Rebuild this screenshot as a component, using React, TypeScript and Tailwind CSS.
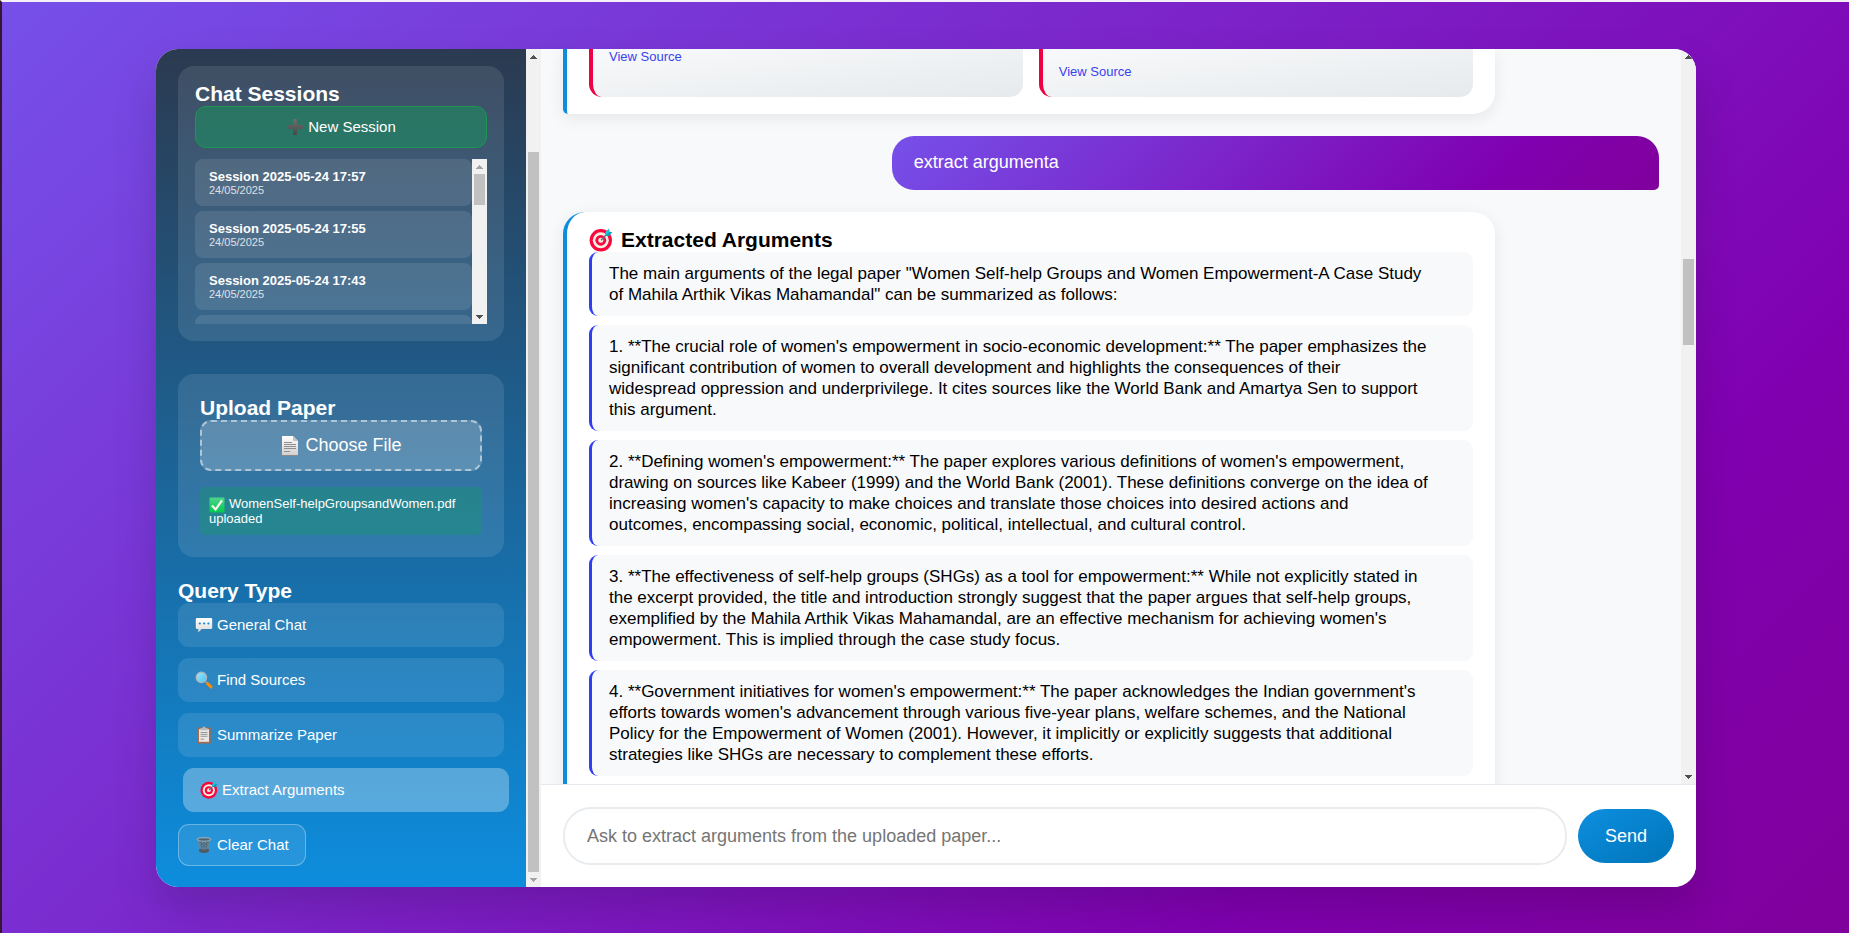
import React from "react";

const sessions = [
  { name: "Session 2025-05-24 17:57", date: "24/05/2025" },
  { name: "Session 2025-05-24 17:55", date: "24/05/2025" },
  { name: "Session 2025-05-24 17:43", date: "24/05/2025" },
];

const argumentsList = [
  `The main arguments of the legal paper "Women Self-help Groups and Women Empowerment-A Case Study
of Mahila Arthik Vikas Mahamandal" can be summarized as follows:`,
  `1. **The crucial role of women's empowerment in socio-economic development:** The paper emphasizes the
significant contribution of women to overall development and highlights the consequences of their
widespread oppression and underprivilege. It cites sources like the World Bank and Amartya Sen to support
this argument.`,
  `2. **Defining women's empowerment:** The paper explores various definitions of women's empowerment,
drawing on sources like Kabeer (1999) and the World Bank (2001). These definitions converge on the idea of
increasing women's capacity to make choices and translate those choices into desired actions and
outcomes, encompassing social, economic, political, intellectual, and cultural control.`,
  `3. **The effectiveness of self-help groups (SHGs) as a tool for empowerment:** While not explicitly stated in
the excerpt provided, the title and introduction strongly suggest that the paper argues that self-help groups,
exemplified by the Mahila Arthik Vikas Mahamandal, are an effective mechanism for achieving women's
empowerment. This is implied through the case study focus.`,
  `4. **Government initiatives for women's empowerment:** The paper acknowledges the Indian government's
efforts towards women's advancement through various five-year plans, welfare schemes, and the National
Policy for the Empowerment of Women (2001). However, it implicitly or explicitly suggests that additional
strategies like SHGs are necessary to complement these efforts.`,
];

type IconProps = { className?: string };

function PlusIcon({ className = "size-[18px]" }: IconProps) {
  return (
    <svg viewBox="0 0 18 18" className={className} aria-hidden="true">
      <defs>
        <linearGradient id="plus-fill" x1="0" y1="0" x2="0" y2="1">
          <stop offset="0" stopColor="#6e6e6e" />
          <stop offset="1" stopColor="#484848" />
        </linearGradient>
      </defs>
      <path
        fill="url(#plus-fill)"
        d="M7.6 1h2.8q.5 0 .5.5v5.6h5.6q.5 0 .5.5v2.8q0 .5-.5.5h-5.6v5.600q0 .5-.5.5H7.600q-.5 0-.5-.5v-5.600H1.500q-.5 0-.5-.5V7.600q0-.5.5-.5h5.600V1.500q0-.5.5-.5z"
      />
    </svg>
  );
}

function PageIcon({ className = "size-5" }: IconProps) {
  return (
    <svg viewBox="0 0 20 20" className={className} aria-hidden="true">
      <defs>
        <linearGradient id="page-fill" x1="0" y1="0" x2="0" y2="1">
          <stop offset="0" stopColor="#ffffff" />
          <stop offset="1" stopColor="#d2d0ce" />
        </linearGradient>
      </defs>
      <path fill="#8d8a88" d="M2 1h11l5 5v14H2z" />
      <path fill="url(#page-fill)" d="M2 0h11l5 5v14H2z" />
      <path fill="#c4c1bf" d="M13 0l5 5h-4q-1 0-1-1z" />
      <path stroke="#8f8f8f" strokeWidth="1" d="M4 6.500h8M4 8.500h12M4 10.500h12M4 12.500h12M4 15.500h6" />
    </svg>
  );
}

function CheckIcon({ className = "size-4" }: IconProps) {
  return (
    <svg viewBox="0 0 16 16" className={className} aria-hidden="true">
      <defs>
        <linearGradient id="check-fill" x1="0" y1="0" x2="0" y2="1">
          <stop offset="0" stopColor="#4fd48a" />
          <stop offset="1" stopColor="#00c853" />
        </linearGradient>
      </defs>
      <rect x=".5" y=".5" width="15" height="15" rx="1" fill="url(#check-fill)" />
      <path d="M3 8.500l3.600 4L13 3.300" fill="none" stroke="#f5f3ea" strokeWidth="2.200" />
    </svg>
  );
}

function BubbleIcon({ className = "size-[18px]" }: IconProps) {
  return (
    <svg viewBox="0 0 18 18" className={className} aria-hidden="true">
      <defs>
        <linearGradient id="bubble-fill" x1="0" y1="0" x2="0" y2="1">
          <stop offset="0" stopColor="#ffffff" />
          <stop offset="1" stopColor="#dcdad8" />
        </linearGradient>
      </defs>
      <path
        fill="url(#bubble-fill)"
        d="M2 2h14q1.200 0 1.200 1.200v8.600q0 1.200-1.200 1.200H6.400Q5 15.800 2.400 16.200q1.200-1.400 1.100-3.200H2q-1.200 0-1.200-1.200V3.200Q.8 2 2 2z"
      />
      <circle cx="4.800" cy="7.500" r="1.100" fill="#1581d8" />
      <circle cx="9.100" cy="7.500" r="1.100" fill="#1581d8" />
      <circle cx="13.400" cy="7.500" r="1.100" fill="#1581d8" />
    </svg>
  );
}

function MagnifierIcon({ className = "size-[18px]" }: IconProps) {
  return (
    <svg viewBox="0 0 18 18" className={className} aria-hidden="true">
      <defs>
        <linearGradient id="lens-fill" x1="0" y1="0" x2="1" y2="1">
          <stop offset="0" stopColor="#a4e6fb" />
          <stop offset="1" stopColor="#45c4f4" />
        </linearGradient>
      </defs>
      <path d="M10 10l3 3" stroke="#9a9a9a" strokeWidth="1.600" />
      <path d="M12.700 12.700l3.200 3.200" stroke="#ff8a00" strokeWidth="3" strokeLinecap="round" />
      <circle cx="6.400" cy="6.400" r="5.200" fill="url(#lens-fill)" stroke="#b3b6b8" strokeWidth="1.200" />
    </svg>
  );
}

function ClipboardIcon({ className = "size-[18px]" }: IconProps) {
  return (
    <svg viewBox="0 0 18 18" className={className} aria-hidden="true">
      <rect x="2.300" y="1.600" width="13.400" height="15.800" rx="1" fill="#a56a4a" />
      <rect x="4" y="3.200" width="10" height="12.600" fill="#e9e7e5" />
      <path fill="#b9b9b9" d="M5.500 2h2q0-1.600 1.500-1.600T10.500 2h2v2.200h-7z" />
      <path stroke="#8f8f8f" strokeWidth=".9" d="M5.500 6.500h7M5.500 8.400h7M5.500 10.300h7M5.500 13.200h3.600" />
    </svg>
  );
}

function TargetIcon({ className = "size-[18px]" }: IconProps) {
  return (
    <svg viewBox="0 0 24 24" className={className} aria-hidden="true">
      <circle cx="11.800" cy="12.300" r="11.200" fill="#f8083c" />
      <circle cx="11.800" cy="12.300" r="8" fill="#f6efe4" />
      <circle cx="11.800" cy="12.300" r="5.400" fill="#f8083c" />
      <circle cx="11.800" cy="12.300" r="2.500" fill="#f6efe4" />
      <path d="M12 12.200L19 5" stroke="#5c7786" strokeWidth="1.500" />
      <path fill="#00a3c4" d="M16.500 4.300L20 .8l.4 3 3 .4-3.600 3.700-3-.3z" />
      <path fill="#26c6da" d="M16.500 4.300L20 .8l.4 3-3.600 3.800z" />
    </svg>
  );
}

function BinIcon({ className = "size-[18px]" }: IconProps) {
  return (
    <svg viewBox="0 0 18 18" className={className} aria-hidden="true">
      <path fill="#6b8ba4" fillOpacity=".75" d="M2.200 3.500h13.600L13.700 16q-4.700 2-9.400 0z" />
      <path
        fill="none"
        stroke="#56666f"
        strokeWidth=".8"
        d="M4 5l8.500 8M7.500 5l6 5.500M11 5l3.500 3.200M14 5l-8.500 8M10.500 5l-6 5.500M7 5L3.500 8.200M6 5.500l.8 7.500M12 5.500l-.8 7.500M9 5.500V13"
      />
      <path fill="#4f5b62" d="M3.900 12.800q5.100 1.400 10.200 0L13.600 16q-4.600 1.900-9.200 0z" />
      <ellipse cx="9" cy="3.300" rx="7" ry="1.900" fill="#7b8d97" stroke="#9fb0b9" strokeWidth=".8" />
      <ellipse cx="9" cy="3.500" rx="5.200" ry=".9" fill="#4b6273" />
    </svg>
  );
}

const queryTypes = [
  { Icon: BubbleIcon, label: "General Chat", active: false },
  { Icon: MagnifierIcon, label: "Find Sources", active: false },
  { Icon: ClipboardIcon, label: "Summarize Paper", active: false },
  { Icon: TargetIcon, label: "Extract Arguments", active: true },
];

function Arrow({ up, dim }: { up?: boolean; dim?: boolean }) {
  return (
    <svg
      width="15"
      height="15"
      viewBox="0 0 15 15"
      shapeRendering="crispEdges"
      className={dim ? "shrink-0 fill-[#a3a3a3]" : "shrink-0 fill-[#505050]"}
      aria-hidden="true"
    >
      <path d={up ? "M7 6h1v1h1v1h1v1h1v1H4V9h1V8h1V7h1z" : "M4 6h7v1h-1v1H9v1H8v1H7V9H6V8H5V7H4z"} />
    </svg>
  );
}

function Scrollbar({
  thumb,
  before,
  upDim,
  downDim,
}: {
  thumb: string;
  before: string;
  upDim?: boolean;
  downDim?: boolean;
}) {
  return (
    <div className="flex w-[15px] shrink-0 flex-col items-center bg-[#f1f1f1]" aria-hidden="true">
      <Arrow up dim={upDim} />
      <div className={before} />
      <div className={`w-[11px] bg-[#c1c1c1] ${thumb}`} />
      <div className="flex-1" />
      <Arrow dim={downDim} />
    </div>
  );
}

function SessionsCard() {
  return (
    <section className="rounded-2xl bg-white/10 px-[17px] pt-4 pb-[17px]">
      <h3 className="text-[21px] leading-6 font-bold">Chat Sessions</h3>
      <button
        type="button"
        className="flex h-[42px] w-full items-center justify-center gap-1 rounded-[11px] border border-[#1a9850] bg-[#0da859]/40 text-[15px] hover:bg-[#0da859]/60"
      >
        <PlusIcon />
        New Session
      </button>
      <div className="mt-[11px] flex h-[165px]">
        <ul className="flex flex-1 flex-col gap-[5px] overflow-hidden">
          {sessions.map((s) => (
            <li key={s.name} className="h-[47px] shrink-0">
              <button type="button" className="h-full w-full rounded-lg bg-white/10 px-[14px] text-left">
                <span className="block text-[13px] leading-[14px] font-bold">{s.name}</span>
                <span className="block text-[11px] leading-3 opacity-80">{s.date}</span>
              </button>
            </li>
          ))}
          <li className="h-[47px] shrink-0 rounded-lg bg-white/10" aria-hidden="true" />
        </ul>
        <Scrollbar before="" thumb="h-[31px]" upDim />
      </div>
    </section>
  );
}

function UploadCard() {
  return (
    <section className="mt-[33px] rounded-2xl bg-white/10 p-[22px]">
      <h3 className="text-[21px] leading-6 font-bold">Upload Paper</h3>
      <button
        type="button"
        className="flex h-[51px] w-full items-center justify-center gap-[5px] rounded-[11px] border-2 border-dashed border-white/50 bg-white/20 text-[18px]"
      >
        <PageIcon />
        Choose File
      </button>
      <p className="mt-4 rounded-[5px] bg-[#0da55a]/30 p-[9px] text-[13px] leading-[15px]">
        <CheckIcon className="-my-1 mr-1 inline-block size-4" />
        WomenSelf-helpGroupsandWomen.pdf uploaded
      </p>
    </section>
  );
}

function Sidebar() {
  return (
    <aside className="flex w-[385px] shrink-0">
      <div className="flex-1 bg-linear-to-b/srgb from-[#2b3a50] to-[#0d8ddd] px-[22px] pt-[17px] text-white">
        <SessionsCard />
        <UploadCard />
        <h3 className="mt-[22px] text-[21px] leading-6 font-bold">Query Type</h3>
        <div className="flex flex-col gap-[11px]">
          {queryTypes.map(({ Icon, label, active }) => (
            <button
              key={label}
              type="button"
              aria-pressed={active}
              className={
                active
                  ? "flex h-11 translate-x-[5px] items-center gap-1 rounded-[11px] bg-white/30 px-[17px] text-left text-[15px]"
                  : "flex h-11 items-center gap-1 rounded-[11px] bg-white/10 px-[17px] text-left text-[15px]"
              }
            >
              <Icon />
              {label}
            </button>
          ))}
        </div>
        <button
          type="button"
          className="mt-3 flex h-[42px] items-center gap-1 rounded-[11px] border border-white/30 bg-white/10 px-4 text-[15px]"
        >
          <BinIcon />
          Clear Chat
        </button>
      </div>
      <Scrollbar before="h-[88px]" thumb="h-[720px]" downDim />
    </aside>
  );
}

function SourceCard({ pad }: { pad: string }) {
  return (
    <div
      className={`h-12 flex-1 rounded-b-[13px] border-l-4 border-[#ef0042] bg-linear-to-br/srgb from-[#f8f9fa] to-[#e6eaed] px-4 ${pad}`}
    >
      <a href="#source" className="block text-[13px] leading-[15px] text-[#3a42f0]">
        View Source
      </a>
    </div>
  );
}

function Messages() {
  return (
    <div className="flex min-h-0 flex-1">
      <div className="flex min-w-0 flex-1 flex-col overflow-hidden bg-[#f8f9fb] px-[22px]">
        <article className="flex w-[85%] shrink-0 gap-4 rounded-br-[22px] rounded-bl-[5px] border-l-4 border-[#0d8ddb] bg-white px-[22px] pb-[17px] shadow-[0_4px_16px_rgba(0,0,0,0.08)]">
          <SourceCard pad="" />
          <SourceCard pad="pt-[15px]" />
        </article>
        <p className="mt-[22px] h-[54px] w-[70%] shrink-0 self-end rounded-[22px] rounded-br-[5px] bg-linear-[135deg,#7650e9_0%,#8000b0_78%,#80009c_100%] px-[22px] py-4 text-[18px] leading-[21px] text-white">
          extract argumenta
        </p>
        <article className="mt-[22px] w-[85%] shrink-0 rounded-t-[22px] border-l-4 border-[#0d8ddb] bg-white px-[22px] pt-4 pb-10 text-black shadow-[0_4px_16px_rgba(0,0,0,0.08)]">
          <h3 className="flex items-center gap-2 text-[21px] leading-6 font-bold">
            <TargetIcon className="size-6" />
            Extracted Arguments
          </h3>
          <div className="flex flex-col gap-[9px]">
            {argumentsList.map((text) => (
              <p
                key={text}
                className="rounded-[9px] border-l-3 border-[#2f3df5] bg-[#f8f9fb] px-[17px] py-[11px] text-[17px] leading-[21px] whitespace-pre-line"
              >
                {text}
              </p>
            ))}
          </div>
        </article>
      </div>
      <Scrollbar before="h-[195px]" thumb="h-[86px]" />
    </div>
  );
}

function Composer() {
  return (
    <form
      className="flex shrink-0 items-center gap-[11px] border-t border-[#e6eaee] bg-white p-[22px]"
      onSubmit={(e) => e.preventDefault()}
    >
      <input
        type="text"
        aria-label="Message"
        placeholder="Ask to extract arguments from the uploaded paper..."
        className="h-[58px] min-w-0 flex-1 rounded-[28px] border-2 border-[#e9ecef] px-[22px] text-[18px] placeholder:text-[#757575]"
      />
      <button
        type="submit"
        className="h-[54px] w-24 rounded-[27px] bg-linear-to-br/srgb from-[#0d8fe0] to-[#0074b8] text-[18px] text-white"
      >
        Send
      </button>
    </form>
  );
}

export default function App() {
  return (
    <div className="h-screen border-t-2 border-l-2 border-t-[#f4f0f6] border-l-[#35172f] bg-linear-[135deg,#7650e9_0%,#8000b0_78%,#80009c_100%] pt-[47px] pr-[153px] pb-[46px] pl-[154px] font-['Liberation_Sans',Arial,sans-serif]">
      <main className="mx-auto flex h-full max-w-[1540px] overflow-hidden rounded-[22px] bg-white shadow-[0_22px_44px_rgba(0,0,0,0.15)]">
        <Sidebar />
        <section className="flex min-w-0 flex-1 flex-col">
          <Messages />
          <Composer />
        </section>
      </main>
    </div>
  );
}
